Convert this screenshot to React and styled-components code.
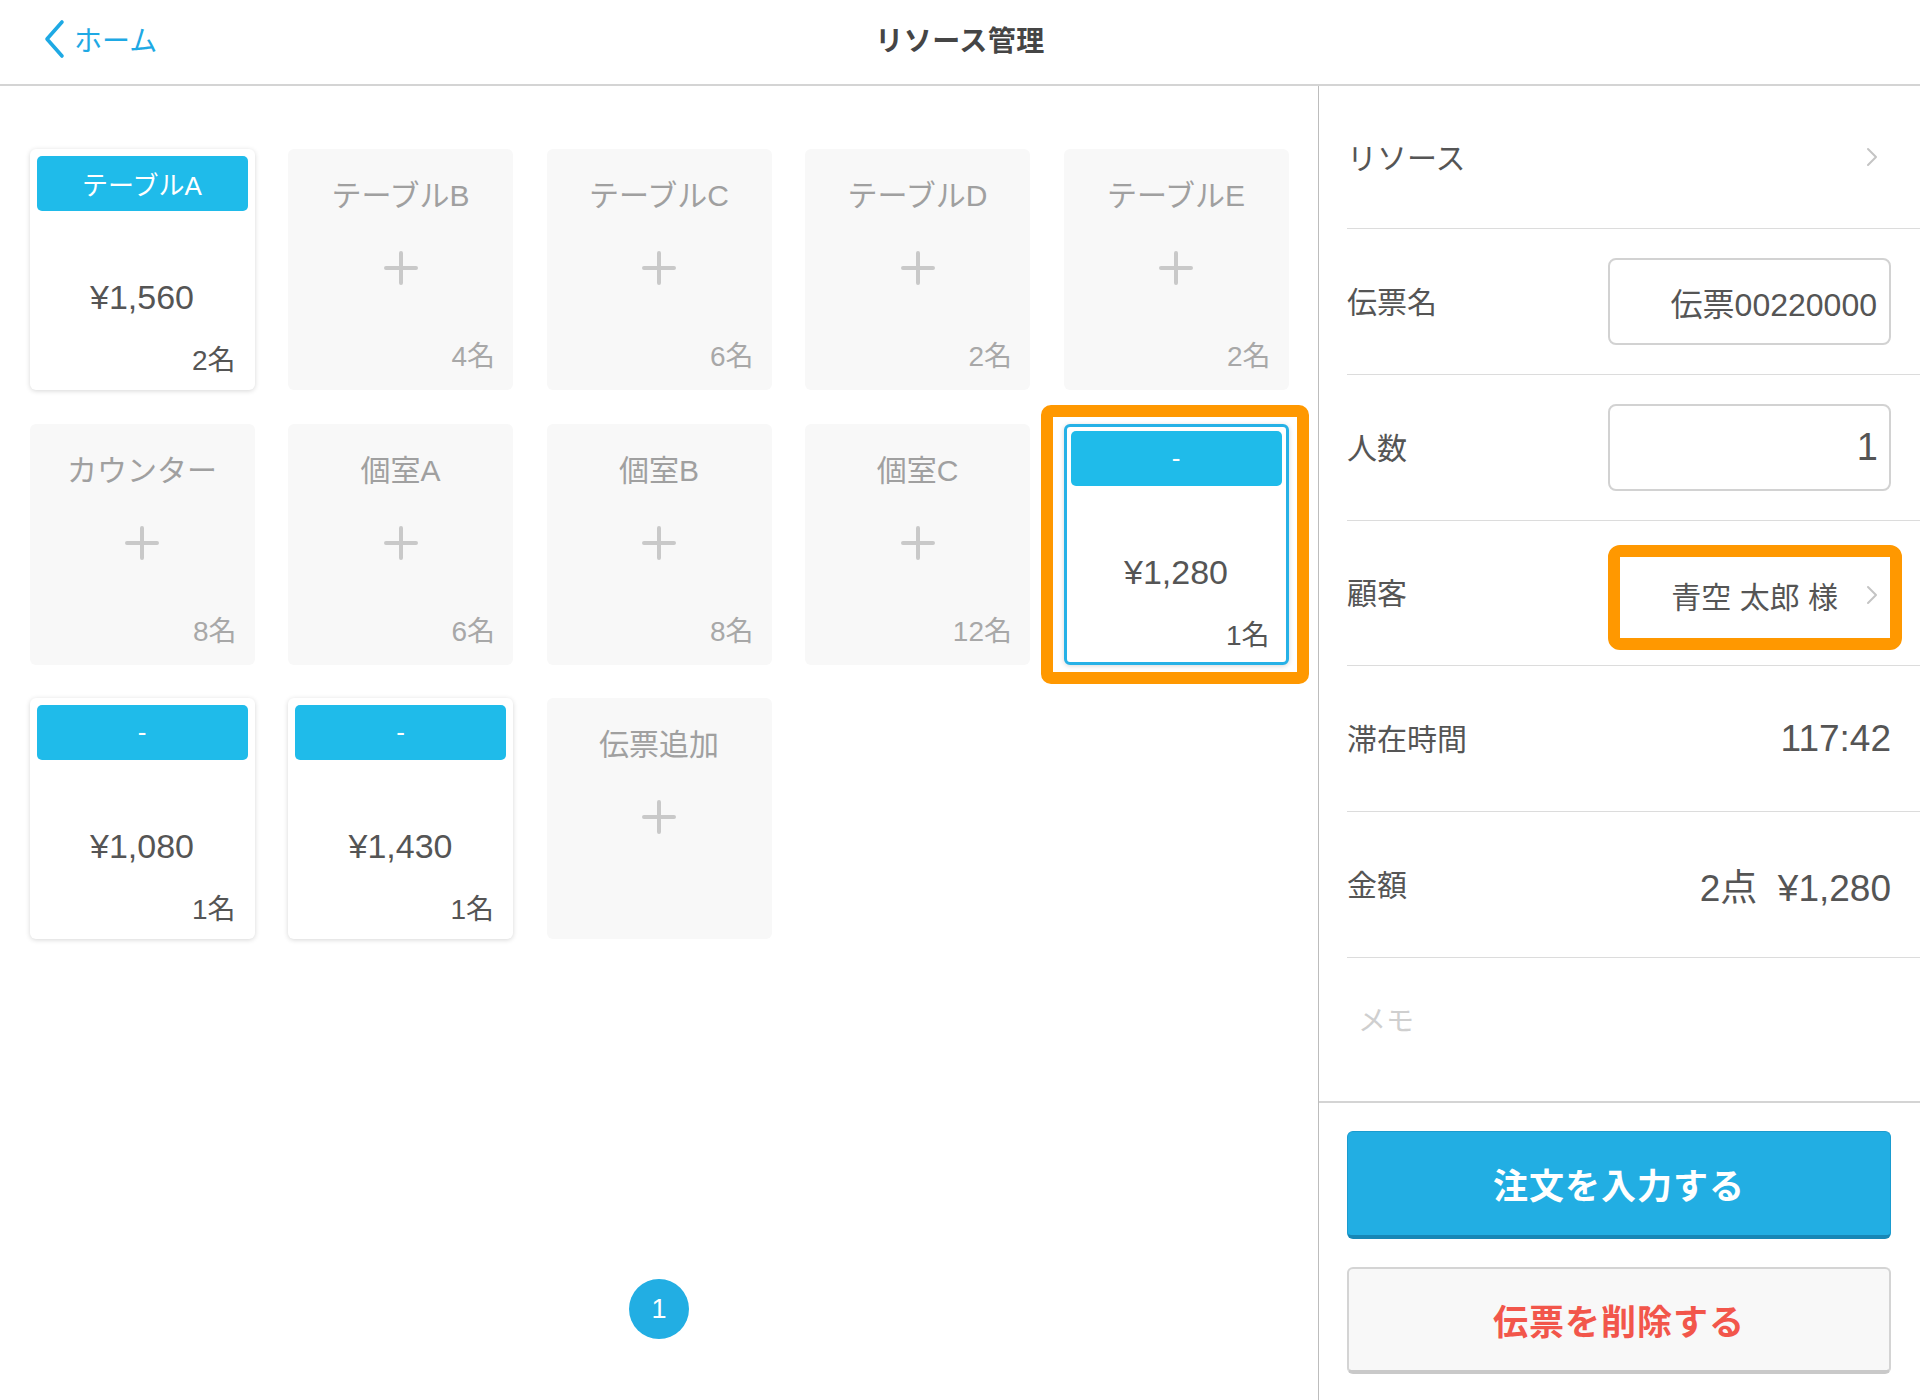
import styled, { createGlobalStyle } from "styled-components"

const GlobalStyle = createGlobalStyle`
  html, body {
    margin: 0;
    padding: 0;
    background: #fff;
    font-family: "Liberation Sans", "Noto Sans CJK JP", sans-serif;
  }
`

const cards = [
  { type: "active", label: "テーブルA", price: "¥1,560", count: "2名" },
  { type: "empty", label: "テーブルB", count: "4名" },
  { type: "empty", label: "テーブルC", count: "6名" },
  { type: "empty", label: "テーブルD", count: "2名" },
  { type: "empty", label: "テーブルE", count: "2名" },
  { type: "empty", label: "カウンター", count: "8名" },
  { type: "empty", label: "個室A", count: "6名" },
  { type: "empty", label: "個室B", count: "8名" },
  { type: "empty", label: "個室C", count: "12名" },
  { type: "active", label: "-", price: "¥1,280", count: "1名", selected: true },
  { type: "active", label: "-", price: "¥1,080", count: "1名" },
  { type: "active", label: "-", price: "¥1,430", count: "1名" },
  { type: "add", label: "伝票追加" },
]

function PlusIcon() {
  return (
    <svg width="34" height="34" viewBox="0 0 34 34">
      <path d="M17 2v30M2 17h30" stroke="#c9c9c9" strokeWidth="4" strokeLinecap="round" />
    </svg>
  )
}

function Chevron({ color = "#c4c4c4", w = 12, h = 20, sw = 2 }) {
  return (
    <svg width={w} height={h} viewBox={`0 0 ${w} ${h}`}>
      <path d={`M${sw} ${sw} L${w - sw} ${h / 2} L${sw} ${h - sw}`} fill="none" stroke={color} strokeWidth={sw} strokeLinecap="round" strokeLinejoin="round" />
    </svg>
  )
}

function ResourceCard({ card }) {
  if (card.type === "active") {
    return (
      <Card $active $selected={card.selected}>
        <Bar>{card.label}</Bar>
        <Price>{card.price}</Price>
        <Count $active>{card.count}</Count>
        {card.selected && <Highlight />}
      </Card>
    )
  }
  return (
    <Card>
      <CardTitle>{card.label}</CardTitle>
      <PlusWrap>
        <PlusIcon />
      </PlusWrap>
      {card.count && <Count>{card.count}</Count>}
    </Card>
  )
}

export default function App() {
  return (
    <Page>
      <GlobalStyle />
      <Header>
        <BackButton>
          <svg width="24" height="40" viewBox="0 0 24 40">
            <path d="M20 3 L5 20 L20 37" fill="none" stroke="#1ea9e4" strokeWidth="3.6" strokeLinecap="round" strokeLinejoin="round" />
          </svg>
          <span>ホーム</span>
        </BackButton>
        <Title>リソース管理</Title>
        <div />
      </Header>
      <Body>
        <LeftPanel>
          <CardGrid>
            {cards.map((c, i) => (
              <ResourceCard key={i} card={c} />
            ))}
          </CardGrid>
          <Pagination>
            <PageDot>1</PageDot>
          </Pagination>
        </LeftPanel>
        <RightPanel>
          <Row $h={143}>
            <Label>リソース</Label>
            <ChevronWrap>
              <Chevron />
            </ChevronWrap>
          </Row>
          <Row $h={146}>
            <Label>伝票名</Label>
            <InputBox>伝票00220000</InputBox>
          </Row>
          <Row $h={145.5}>
            <Label>人数</Label>
            <InputBox $big>1</InputBox>
          </Row>
          <Row $h={145.5}>
            <Label>顧客</Label>
            <CustomerField>
              <span>青空 太郎 様</span>
              <Chevron />
              <FieldHighlight />
            </CustomerField>
          </Row>
          <Row $h={146}>
            <Label>滞在時間</Label>
            <Value>117:42</Value>
          </Row>
          <Row $h={146}>
            <Label>金額</Label>
            <Value>2点&nbsp;&nbsp;¥1,280</Value>
          </Row>
          <Memo>メモ</Memo>
          <ButtonArea>
            <PrimaryButton>注文を入力する</PrimaryButton>
            <DangerButton>伝票を削除する</DangerButton>
          </ButtonArea>
        </RightPanel>
      </Body>
    </Page>
  )
}

const Page = styled.div`
  width: 1920px;
  height: 1400px;
  display: flex;
  flex-direction: column;
  overflow: hidden;
`
const Header = styled.div`
  height: 86px;
  box-sizing: border-box;
  padding-bottom: 7px;
  flex-shrink: 0;
  display: grid;
  grid-template-columns: 1fr auto 1fr;
  align-items: center;
  border-bottom: 2px solid #d4d4d4;
`
const BackButton = styled.div`
  display: flex;
  align-items: center;
  gap: 8px;
  padding-left: 42px;
  color: #1ea9e4;
  font-size: 28px;
`
const Title = styled.div`
  font-size: 28px;
  font-weight: bold;
  color: #454545;
  letter-spacing: 0.5px;
`
const Body = styled.div`
  flex: 1;
  display: flex;
`
const LeftPanel = styled.div`
  width: 1319px;
  box-sizing: border-box;
  border-right: 1px solid #bdbdbd;
  display: flex;
  flex-direction: column;
  padding: 63px 0 0 29.5px;
`
const CardGrid = styled.div`
  display: grid;
  grid-template-columns: repeat(5, 225px);
  gap: 33.5px;
`
const Card = styled.div`
  position: relative;
  box-sizing: border-box;
  width: 225px;
  height: 241px;
  border-radius: 6px;
  display: flex;
  flex-direction: column;
  padding: ${(p) => (p.$selected ? "4px" : "7px")};
  background: ${(p) => (p.$active ? "#fff" : "#f8f8f8")};
  border: ${(p) => (p.$selected ? "3px solid #26b1e6" : "none")};
  box-shadow: ${(p) => (p.$active ? "0 1px 5px rgba(0, 0, 0, 0.16)" : "none")};
`
const Bar = styled.div`
  height: 55px;
  flex-shrink: 0;
  border-radius: 5px;
  background: #1fbbea;
  color: #fff;
  font-size: 26px;
  display: flex;
  align-items: center;
  justify-content: center;
`
const Price = styled.div`
  margin-top: 66px;
  line-height: 40px;
  font-size: 34px;
  text-align: center;
  color: #555;
`
const Count = styled.div`
  margin-top: auto;
  margin-bottom: ${(p) => (p.$active ? "5px" : "9px")};
  padding-right: ${(p) => (p.$active ? "12px" : "11px")};
  text-align: right;
  font-size: 28px;
  line-height: 34px;
  color: ${(p) => (p.$active ? "#555" : "#a8a8a8")};
`
const CardTitle = styled.div`
  margin-top: 20px;
  line-height: 40px;
  font-size: 30px;
  text-align: center;
  color: #a0a0a0;
`
const PlusWrap = styled.div`
  margin-top: 35px;
  display: flex;
  justify-content: center;
`
const Highlight = styled.div`
  position: absolute;
  top: -22px;
  left: -26px;
  right: -23px;
  bottom: -22px;
  border: 12px solid #ff9800;
  border-radius: 10px;
  pointer-events: none;
`
const Pagination = styled.div`
  margin-top: auto;
  margin-bottom: 61px;
  display: flex;
  justify-content: center;
  padding-right: 29.5px;
`
const PageDot = styled.div`
  width: 60px;
  height: 60px;
  border-radius: 50%;
  background: #22aee3;
  color: #fff;
  font-size: 27px;
  display: flex;
  align-items: center;
  justify-content: center;
`
const RightPanel = styled.div`
  flex: 1;
  display: flex;
  flex-direction: column;
`
const Row = styled.div`
  height: ${(p) => p.$h}px;
  box-sizing: border-box;
  margin-left: 28px;
  padding-right: 29px;
  border-bottom: 1px solid #dcdcdc;
  display: flex;
  align-items: center;
  justify-content: space-between;
`
const Label = styled.div`
  font-size: 30px;
  color: #555;
  margin-top: -3px;
`
const ChevronWrap = styled.div`
  display: flex;
  padding-right: 13px;
`
const InputBox = styled.div`
  width: 283px;
  height: 87px;
  box-sizing: border-box;
  border: 2px solid #d2d2d2;
  border-radius: 8px;
  display: flex;
  align-items: center;
  justify-content: flex-end;
  padding-right: ${(p) => (p.$big ? "11px" : "12px")};
  font-size: ${(p) => (p.$big ? "38px" : "32px")};
  color: #555;
`
const CustomerField = styled.div`
  position: relative;
  width: 283px;
  height: 87px;
  box-sizing: border-box;
  display: flex;
  align-items: center;
  justify-content: flex-end;
  gap: 28px;
  padding-right: 13px;
  margin-top: 4px;
  font-size: 30px;
  color: #555;
`
const FieldHighlight = styled.div`
  position: absolute;
  top: -6px;
  left: 0;
  right: -11px;
  bottom: -12px;
  border: 12px solid #ff9800;
  border-radius: 12px;
  pointer-events: none;
`
const Value = styled.div`
  font-size: 37px;
  color: #555;
`
const Memo = styled.div`
  height: 145px;
  box-sizing: border-box;
  border-bottom: 2px solid #d4d4d4;
  padding: 44px 0 0 39px;
  font-size: 28px;
  line-height: 40px;
  color: #cfcfcf;
`
const ButtonArea = styled.div`
  display: flex;
  flex-direction: column;
  gap: 28px;
  padding: 28px 29px 0 28px;
`
const PrimaryButton = styled.div`
  height: 108px;
  box-sizing: border-box;
  border-radius: 6px;
  background: #22aee3;
  border: 1px solid #1a9bcf;
  border-bottom: 4px solid #1787b6;
  color: #fff;
  font-size: 35px;
  font-weight: bold;
  letter-spacing: 1px;
  display: flex;
  align-items: center;
  justify-content: center;
`
const DangerButton = styled.div`
  height: 107px;
  box-sizing: border-box;
  border-radius: 6px;
  background: #f8f8f8;
  border: 2px solid #d4d4d4;
  border-bottom: 4px solid #c9c9c9;
  color: #f2564b;
  font-size: 35px;
  font-weight: bold;
  letter-spacing: 1px;
  display: flex;
  align-items: center;
  justify-content: center;
`
